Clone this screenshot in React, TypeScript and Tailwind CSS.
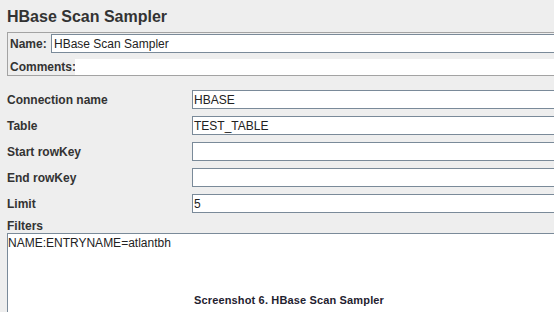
import React from "react";

const champs = [
  { libelle: "Connection name", valeur: "HBASE" },
  { libelle: "Table", valeur: "TEST_TABLE" },
  { libelle: "Start rowKey", valeur: "" },
  { libelle: "End rowKey", valeur: "" },
  { libelle: "Limit", valeur: "5" },
];

export default function App() {
  return (
    <div className="flex h-[312px] w-[554px] flex-col overflow-hidden bg-[#eeeeee] font-['Liberation_Sans',Arial,sans-serif] text-[#333333]">
      {/* Titre */}
      <div className="pl-[7px] pt-[8px] text-[16px] font-bold leading-[18px]">HBase Scan Sampler</div>

      {/* Nom + commentaires */}
      <div className="ml-[7px] mt-[6px] w-[600px] shrink-0 border border-[#a3a3a3] pl-[1px] pt-[1px]">
        <div className="flex h-[19px] items-center">
          <span className="w-[42px] pl-[1px] text-[12px] font-bold leading-[14px]">Name:</span>
          <div className="flex h-[19px] flex-1 items-center border border-[#7a8a99] bg-white pl-[2px] text-[12px] leading-[14px] text-[#222222]">
            HBase Scan Sampler
          </div>
        </div>
        <div className="mt-[6px] flex h-[16px] items-center">
          <span className="w-[66px] pl-[1px] text-[12px] font-bold leading-[14px]">Comments:</span>
          <div className="h-[16px] flex-1 bg-white" />
        </div>
      </div>

      {/* Champs de connexion */}
      <div className="mt-[14px] flex w-[600px] shrink-0 flex-col gap-[7px] pl-[7px]">
        {champs.map((c) => (
          <div key={c.libelle} className="flex h-[19px] items-center">
            <span className="w-[185px] text-[12px] font-bold leading-[14px]">{c.libelle}</span>
            <div className="flex h-[19px] flex-1 items-center border border-[#7a8a99] bg-white pl-[1px] text-[12px] leading-[14px] text-[#222222]">
              {c.valeur}
            </div>
          </div>
        ))}
      </div>

      {/* Filtres */}
      <div className="shrink-0 pl-[7px] pt-[6px] text-[12px] font-bold leading-[14px]">Filters</div>
      <div className="ml-[7px] flex h-[100px] w-[600px] shrink-0 flex-col border border-[#7a8a99] bg-white pt-[2px] text-[#222222]">
        <div className="text-[12px] leading-[14px]">NAME:ENTRYNAME=atlantbh</div>
        <div className="mt-[44px] pl-[186px] text-[11px] font-bold leading-[13px] tracking-[0.15px] text-[#1f2230]">
          Screenshot 6. HBase Scan Sampler
        </div>
      </div>
    </div>
  );
}
